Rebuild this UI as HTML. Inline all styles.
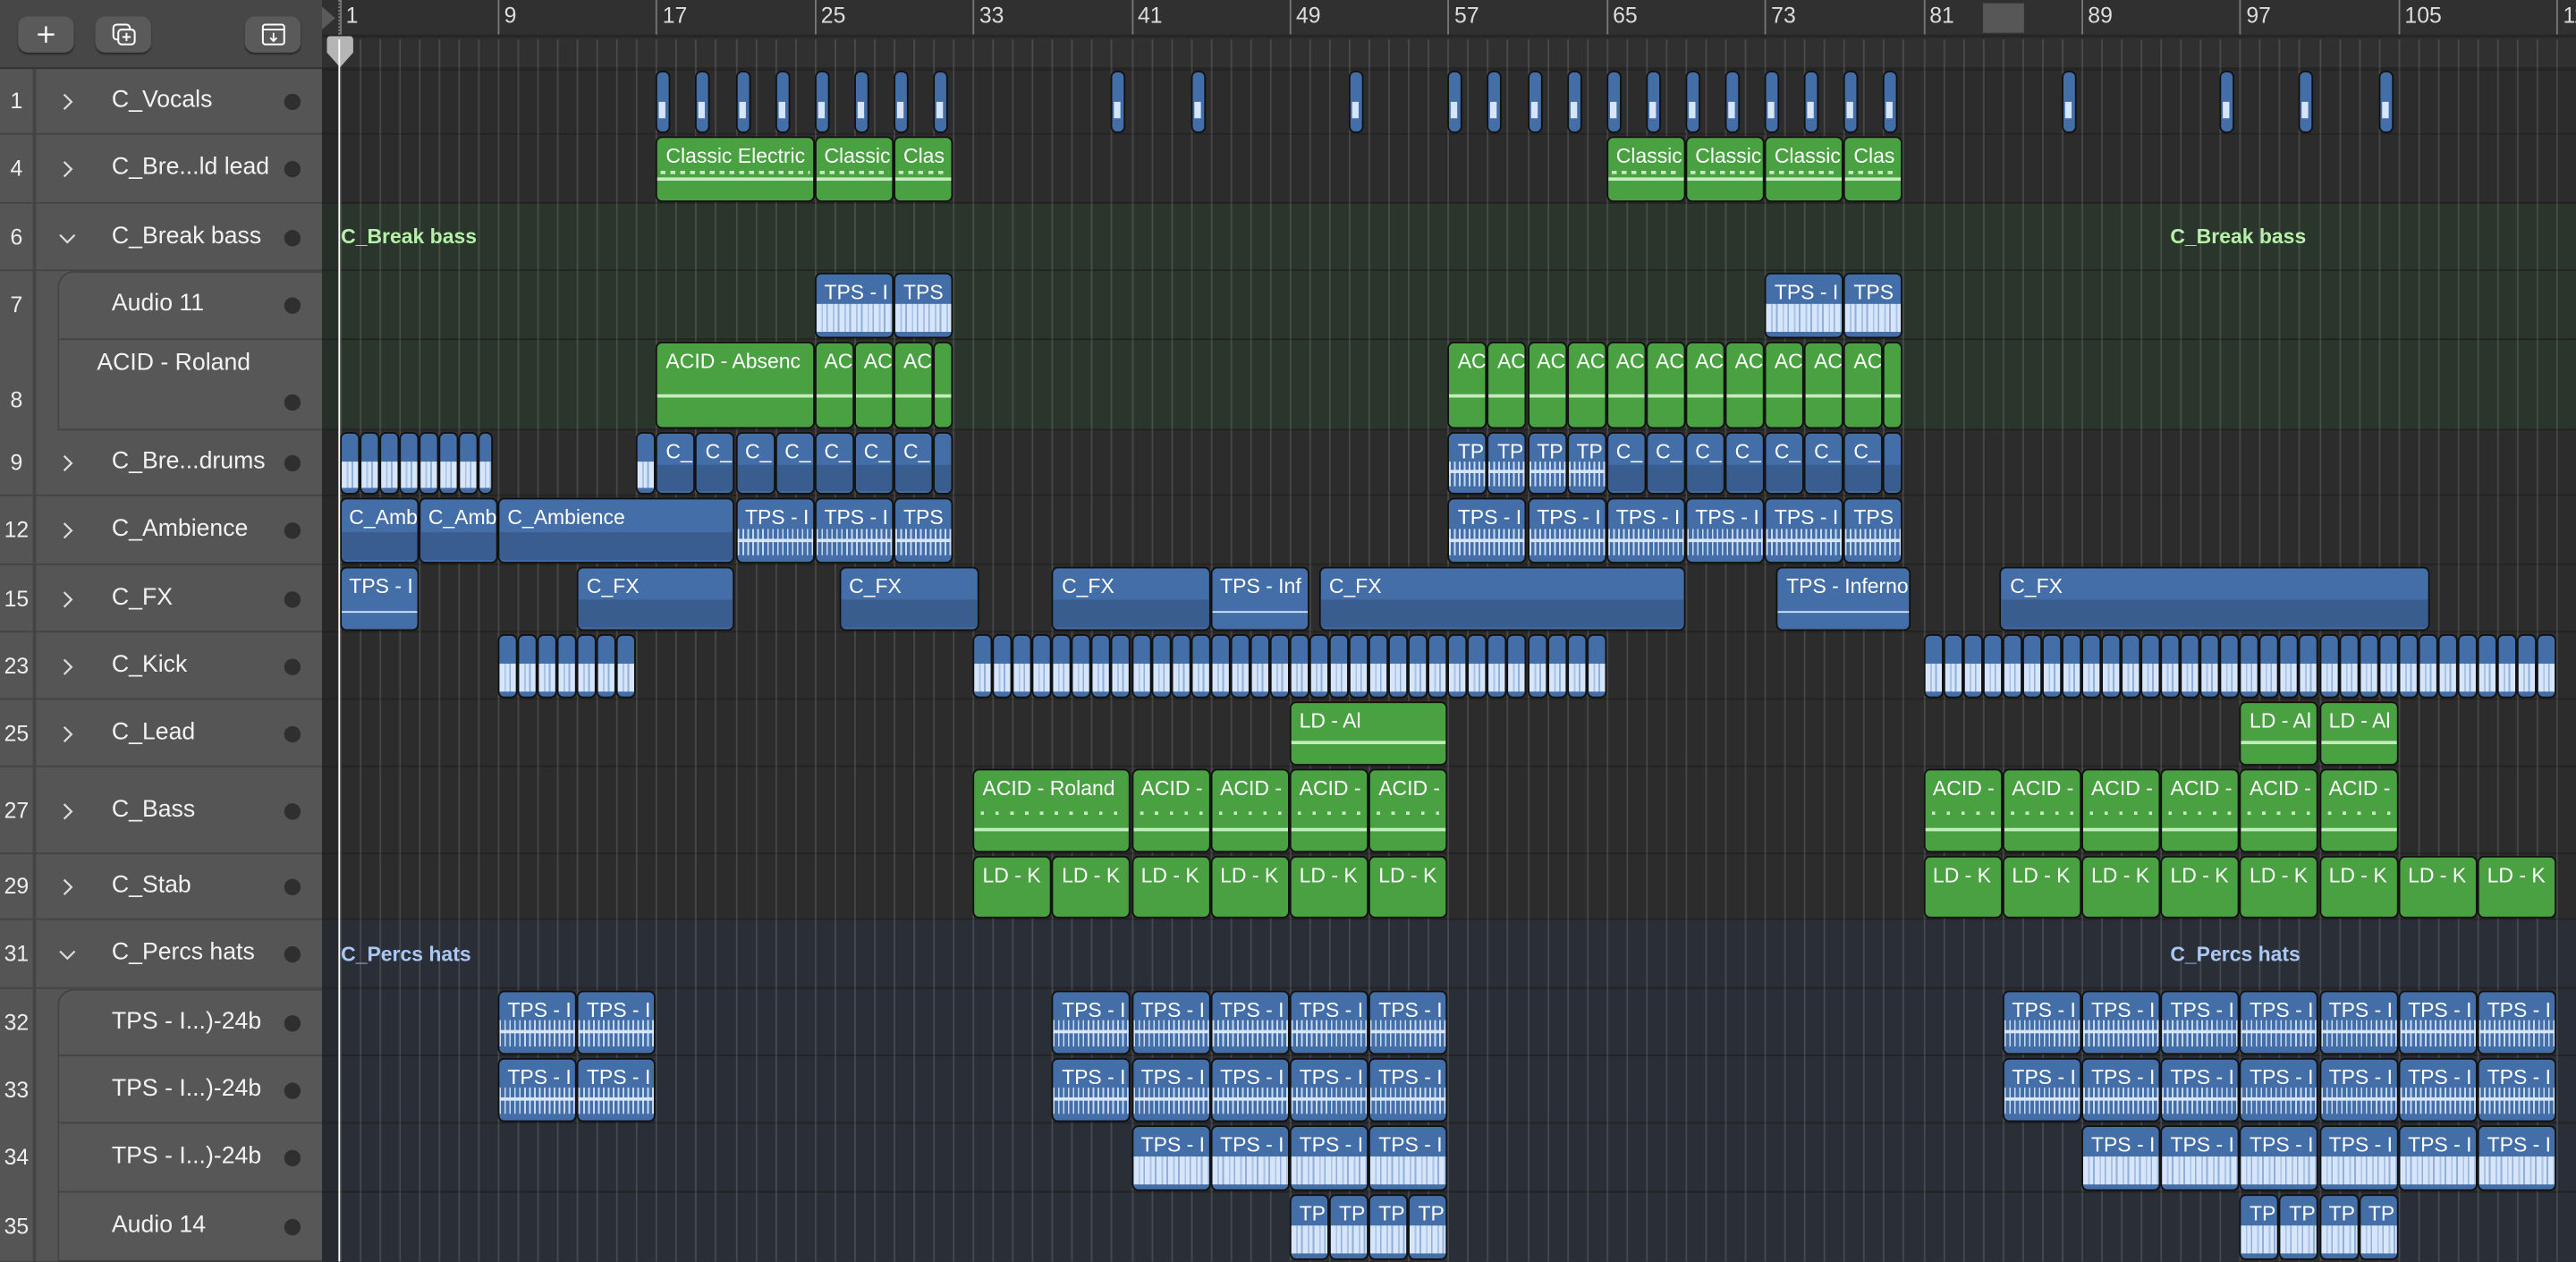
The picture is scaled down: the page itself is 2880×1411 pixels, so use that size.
<!DOCTYPE html>
<html><head><meta charset="utf-8">
<style>
*{margin:0;padding:0;box-sizing:border-box}
html,body{width:2880px;height:1410px;overflow:hidden;background:#2b2b2b}
#s{position:absolute;left:0;top:0;width:1568px;height:768px;transform:scale(1.836735);transform-origin:0 0;font-family:"Liberation Sans",sans-serif;overflow:hidden;background:#2c2c2c}
.abs{position:absolute}
#left{left:0;top:0;width:196px;height:768px;background:#555}
#hdr{left:0;top:0;width:196px;height:42px;background:#474747;border-bottom:1px solid #333}
.btn{position:absolute;top:10px;width:34px;height:22px;border-radius:6px;background:#5a5a5a;box-shadow:0 1px 1px rgba(0,0,0,.4)}
.trow{position:absolute;left:0;width:196px;border-bottom:1.5px solid #444}
.num{position:absolute;left:0;width:20px;text-align:center;color:#eee;font-size:13.5px}
.nm{position:absolute;left:68px;color:#f2f2f2;font-size:14.5px;white-space:nowrap}
.dot{position:absolute;left:173px;width:10px;height:10px;border-radius:50%;background:#2f2f2f}
#ncol{left:20px;top:42px;width:1.5px;height:726px;background:#444}
#tl{left:196px;top:0;width:1372px;height:768px}
.reg{position:absolute;border:1.2px solid #111;border-radius:4px;overflow:hidden;color:#fff;font-size:12.5px;white-space:nowrap}
.reg span{position:absolute;left:5px;top:4px}
.b{background:#436ea8}
.g{background:#4aa142}
</style></head><body><div id="s">
<div id="left" class="abs"></div>
<div id="hdr" class="abs">
 <div class="btn" style="left:11px"><svg width="34" height="22"><path d="M17 6v10M12 11h10" stroke="#fff" stroke-width="1.3"/></svg></div>
 <div class="btn" style="left:58px"><svg width="34" height="22"><rect x="11" y="5" width="10" height="9" rx="2" fill="none" stroke="#fff" stroke-width="1.1"/><rect x="14" y="8" width="10" height="9" rx="2" fill="#5a5a5a" stroke="#fff" stroke-width="1.1"/><path d="M19 10v5M16.5 12.5h5" stroke="#fff" stroke-width="1.1"/></svg></div>
 <div class="btn" style="left:149px"><svg width="34" height="22"><rect x="11" y="5" width="13" height="12" rx="1.5" fill="none" stroke="#fff" stroke-width="1.1"/><path d="M11 8h13M17.5 10v5M15.5 13l2 2 2-2" stroke="#fff" stroke-width="1" fill="none"/></svg></div>
</div>
<div id="ncol" class="abs"></div>
<div id="tracks"></div>
<div id="tl" class="abs"></div>
</div>
<script>
const TL=document.getElementById('tl'),TR=document.getElementById('tracks');
const bounds=[42,82,124,165,207,262,302,344,385,426,467,520,560,602,643,684,726,768];
const tracks=[["1",">","C_Vocals"],["4",">","C_Bre...ld lead"],["6","v","C_Break bass"],["7","","Audio 11"],["8","","ACID - Roland"],["9",">","C_Bre...drums"],["12",">","C_Ambience"],["15",">","C_FX"],["23",">","C_Kick"],["25",">","C_Lead"],["27",">","C_Bass"],["29",">","C_Stab"],["31","v","C_Percs hats"],["32","","TPS - I...)-24b"],["33","","TPS - I...)-24b"],["34","","TPS - I...)-24b"],["35","","Audio 14"]];
const sub=[3,4,13,14,15,16];
let h='';
h+='<div class="abs" style="left:35px;top:165px;width:161px;height:97px;background:#575757;border-left:1.5px solid #444;border-top:1.5px solid #444;border-radius:10px 0 0 0"></div>';
h+='<div class="abs" style="left:35px;top:602px;width:161px;height:166px;background:#575757;border-left:1.5px solid #444;border-top:1.5px solid #444;border-radius:10px 0 0 0"></div>';
tracks.forEach((t,i)=>{const y0=bounds[i],y1=bounds[i+1],hh=y1-y0;let c=y0+hh/2;
 const isSub=sub.includes(i);
 h+=`<div class="trow" style="top:${y0}px;height:${hh}px;${isSub?'left:35px;width:161px':''}"></div>`;
 const nc= i==4? y0+37 : c;
 h+=`<div class="num" style="top:${nc-8}px">${t[0]}</div>`;
 if(t[1]=='>')h+=`<svg class="abs" style="left:37px;top:${c-6}px" width="8" height="12"><path d="M2 1.5l4.5 4.5-4.5 4.5" stroke="#ddd" stroke-width="1.2" fill="none"/></svg>`;
 if(t[1]=='v')h+=`<svg class="abs" style="left:35px;top:${c-4}px" width="12" height="8"><path d="M1.5 2l4.5 4.5 4.5-4.5" stroke="#ddd" stroke-width="1.2" fill="none"/></svg>`;
 const nt= i==4? y0+6 : c-9;
 h+=`<div class="nm" style="top:${nt}px;${i==4?'left:59px':''}">${t[2]}</div>`;
 const dt= i==4? y1-22 : c-5;
 h+=`<div class="dot" style="top:${dt}px"></div>`;
});
TR.innerHTML=h;
const X=b=>10.5+(b-1)*12.05;
let g='';
g+='<div class="abs" style="left:0;top:0;width:1372px;height:21px;background:#303030"></div>';
g+='<div class="abs" style="left:0;top:21px;width:1372px;height:2px;background:#262626"></div>';
g+='<div class="abs" style="left:0;top:23px;width:1372px;height:19px;background:#303030"></div>';
g+='<div class="abs" style="left:0;top:41px;width:1372px;height:2px;background:#252525"></div>';
g+='<div class="abs" style="left:1011px;top:2px;width:25px;height:18px;background:#575757"></div>';
g+='<div class="abs" style="left:0;top:43px;width:1372px;height:725px;background:#2c2c2c"></div>';
g+='<div class="abs" style="left:0;top:124px;width:1372px;height:138px;background:#2a352c"></div>';
g+='<div class="abs" style="left:0;top:560px;width:1372px;height:208px;background:#2a2e36"></div>';
g+='<div class="abs" style="left:0;top:42px;width:11px;height:726px;background:rgba(0,0,0,.08)"></div>';
for(let i=1;i<bounds.length-1;i++)g+=`<div class="abs" style="left:0;top:${bounds[i]-1}px;width:1372px;height:1.3px;background:#232323"></div>`;
for(let b=1;b<=114;b++){const x=X(b);
 g+=`<div class="abs" style="left:${x}px;top:24px;width:1px;height:744px;background:rgba(255,255,255,.13)"></div>`;
 if((b-1)%8==0){g+=`<div class="abs" style="left:${x}px;top:0;width:1px;height:21px;background:#777"></div><div class="abs" style="left:${x+4}px;top:2px;color:#ddd;font-size:13.5px">${b}</div>`;}
}
function wave(type){
 if(type=='a')return '<div class="abs" style="left:0;right:0;bottom:3px;height:45%;background:repeating-linear-gradient(90deg,#d6e5fa 0 3px,#a9c3e6 3px 4px,#d6e5fa 4px 6px,#8fb0db 6px 7px)"></div>';
 if(type=='s')return '<div class="abs" style="left:0;right:0;bottom:4px;height:42%;background:repeating-linear-gradient(90deg,#d6e5fa 0 1px,transparent 1px 3px);opacity:.9"></div><div class="abs" style="left:0;right:0;bottom:12px;height:2px;background:#d6e5fa"></div>';
 if(type=='fx')return '<div class="abs" style="left:0;right:0;bottom:10px;height:1.5px;background:#d6e5fa"></div>';
 if(type=='d')return '<div class="abs" style="left:0;right:0;top:52%;height:45%;background:#3a5d8f"></div>';
 if(type=='m')return '<div class="abs" style="left:2px;right:2px;bottom:16px;height:2px;background:repeating-linear-gradient(90deg,#c5ecbf 0 3px,transparent 3px 6px)"></div><div class="abs" style="left:0;right:0;bottom:12px;height:2px;background:#c5ecbf"></div>';
 if(type=='bd')return '<div class="abs" style="left:4px;right:4px;bottom:22px;height:2px;background:repeating-linear-gradient(90deg,#c5ecbf 0 2px,transparent 2px 9px)"></div><div class="abs" style="left:0;right:0;bottom:12px;height:2px;background:#c5ecbf"></div>';
 if(type=='l')return '<div class="abs" style="left:0;right:0;bottom:18px;height:2px;background:#c5ecbf"></div>';
 if(type=='ln')return '<div class="abs" style="left:0;right:0;bottom:12px;height:2px;background:#c5ecbf"></div>';
 if(type=='v')return '<div class="abs" style="left:1px;bottom:8px;width:4px;height:10px;background:#d6e5fa"></div>';
 return '';
}
function R(row,b0,b1,col,lab,type,hgt){const y0=bounds[row],y1=bounds[row+1];
 const x0=X(b0),x1=X(b1);
 g+=`<div class="reg ${col}" style="left:${x0}px;top:${y0+1}px;width:${x1-x0}px;height:${(hgt||y1-y0)-2}px">${wave(type)}${lab?'<span>'+lab+'</span>':''}</div>`;}
[17,19,21,23,25,27,29,31,40,44,52,57,59,61,63,65,67,69,71,73,75,77,79,88,96,100,104].forEach(b=>R(0,b,b+0.75,'b','','v'));
R(1,17,25,'g','Classic Electric','m');R(1,25,29,'g','Classic','m');R(1,29,32,'g','Clas','m');
R(1,65,69,'g','Classic','m');R(1,69,73,'g','Classic','m');R(1,73,77,'g','Classic','m');R(1,77,80,'g','Clas','m');
g+=`<div class="abs" style="left:${X(1)+1}px;top:137px;color:#b7f0a8;font-size:12.5px;font-weight:bold">C_Break bass</div>`;
g+=`<div class="abs" style="left:1125px;top:137px;color:#b7f0a8;font-size:12.5px;font-weight:bold">C_Break bass</div>`;
R(3,25,29,'b','TPS - I','a');R(3,29,32,'b','TPS','a');R(3,73,77,'b','TPS - I','a');R(3,77,80,'b','TPS','a');
R(4,17,25,'g','ACID - Absenc','l');[25,27,29].forEach(b=>R(4,b,b+2,'g','AC','l'));R(4,31,32,'g','','l');
for(let b=57;b<=77;b+=2)R(4,b,b+2,'g','AC','l');R(4,79,80,'g','','l');
for(let b=1;b<9;b++)R(5,b,Math.min(b+1,8.75),'b','','a');R(5,16,17,'b','','a');
for(let b=17;b<31;b+=2)R(5,b,b+2,'b','C_','d');R(5,31,32,'b','','d');
[57,59,61,63].forEach(b=>R(5,b,b+2,'b','TP','s'));for(let b=65;b<79;b+=2)R(5,b,b+2,'b','C_','d');R(5,79,80,'b','','d');
R(6,1,5,'b','C_Amb','d');R(6,5,9,'b','C_Amb','d');R(6,9,21,'b','C_Ambience','d');R(6,21,25,'b','TPS - I','s');R(6,25,29,'b','TPS - I','s');R(6,29,32,'b','TPS','s');
[57,61,65,69,73].forEach(b=>R(6,b,b+4,'b','TPS - I','s'));R(6,77,80,'b','TPS','s');
R(7,1,5,'b','TPS - I','fx');R(7,13,21,'b','C_FX','d');R(7,26.25,33.3,'b','C_FX','d');R(7,37,45,'b','C_FX','d');R(7,45,50,'b','TPS - Inf','fx');R(7,50.5,69,'b','C_FX','d');R(7,73.6,80.4,'b','TPS - Inferno','fx');R(7,84.9,106.6,'b','C_FX','d');
for(let b=9;b<16;b++)R(8,b,b+1,'b','','a');
for(let b=33;b<65;b++)R(8,b,b+1,'b','','a');
for(let b=81;b<113;b++)R(8,b,b+1,'b','','a');
R(9,49,57,'g','LD - Al','ln');R(9,97,101,'g','LD - Al','ln');R(9,101,105,'g','LD - Al','ln');
R(10,33,41,'g','ACID - Roland','bd');[41,45,49,53].forEach(b=>R(10,b,b+4,'g','ACID -','bd'));
for(let b=81;b<105;b+=4)R(10,b,b+4,'g','ACID -','bd');
for(let b=33;b<57;b+=4)R(11,b,b+4,'g','LD - K','');
for(let b=81;b<113;b+=4)R(11,b,b+4,'g','LD - K','');
g+=`<div class="abs" style="left:${X(1)+1}px;top:574px;color:#a9c8f5;font-size:12.5px;font-weight:bold">C_Percs hats</div>`;
g+=`<div class="abs" style="left:1125px;top:574px;color:#a9c8f5;font-size:12.5px;font-weight:bold">C_Percs hats</div>`;
[13,14].forEach(r=>{R(r,9,13,'b','TPS - I','s');R(r,13,17,'b','TPS - I','s');for(let b=37;b<57;b+=4)R(r,b,b+4,'b','TPS - I','s');for(let b=85;b<113;b+=4)R(r,b,b+4,'b','TPS - I','s');});
for(let b=41;b<57;b+=4)R(15,b,b+4,'b','TPS - I','a');for(let b=89;b<113;b+=4)R(15,b,b+4,'b','TPS - I','a');
[49,51,53,55,97,99,101,103].forEach(b=>R(16,b,b+2,'b','TP','a'));
g+=`<div class="abs" style="left:${X(1)-0.5}px;top:0;width:1px;height:21px;border-left:1px dotted #888"></div>`;
g+=`<div class="abs" style="left:0;top:4px;width:0;height:0;border-top:7px solid transparent;border-bottom:7px solid transparent;border-left:8px solid #5a5a5a"></div>`;
g+=`<svg class="abs" style="left:${X(1)-9}px;top:22px" width="18" height="20"><path d="M3 0h12a2 2 0 0 1 2 2v8l-8 9-8-9v-8a2 2 0 0 1 2-2z" fill="#b5b5b5"/></svg>`;
g+=`<div class="abs" style="left:${X(1)-0.5}px;top:24px;width:1.3px;height:744px;background:#fff"></div>`;
TL.innerHTML=g;
</script>
</body></html>
